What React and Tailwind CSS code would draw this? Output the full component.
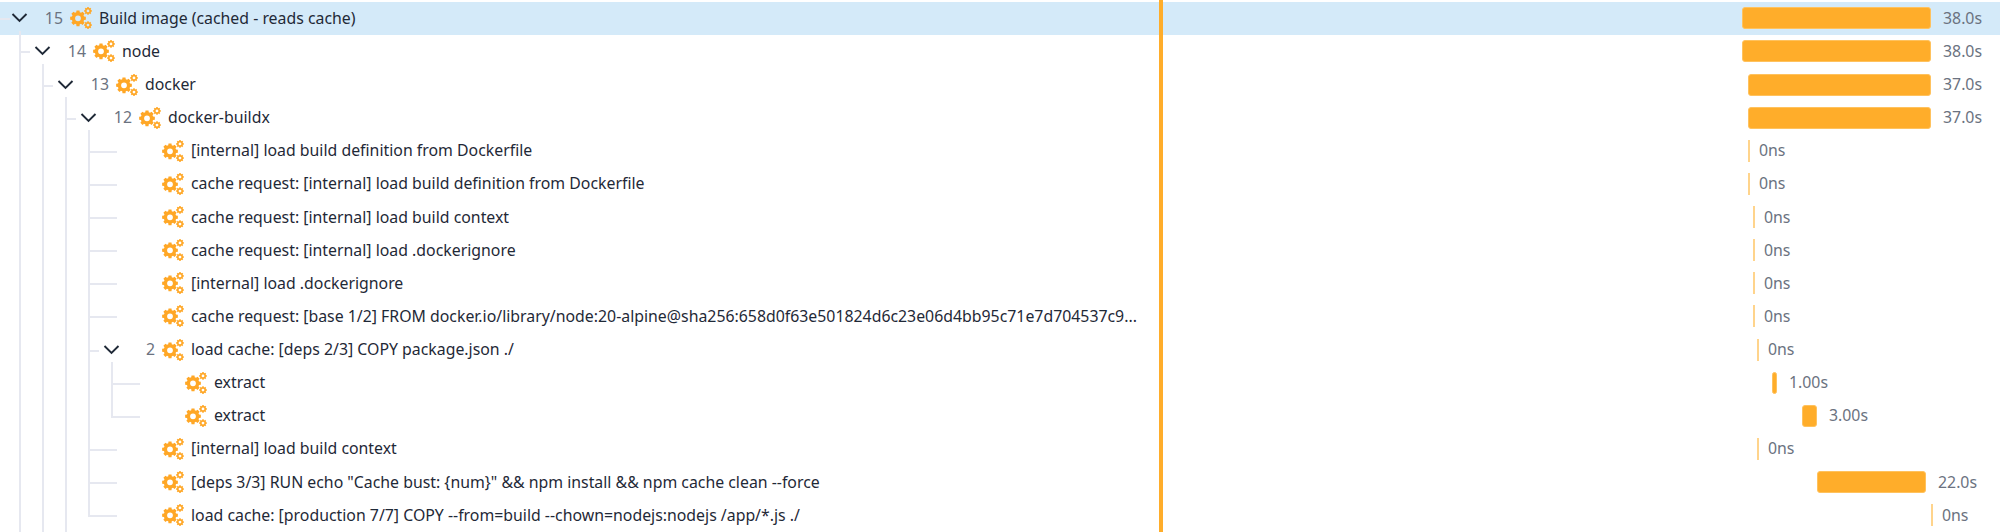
import React from "react";

function gearPath(cx, cy, rOuter, rRoot, rHole, teeth) {
  const pts = [];
  const step = (Math.PI * 2) / teeth;
  for (let i = 0; i < teeth; i++) {
    const a = i * step - Math.PI / 2;
    const w = step * 0.24;
    const w2 = step * 0.36;
    const p = (r, t) => `${(cx + r * Math.cos(t)).toFixed(2)} ${(cy + r * Math.sin(t)).toFixed(2)}`;
    pts.push(p(rRoot, a - w2), p(rOuter, a - w), p(rOuter, a + w), p(rRoot, a + w2));
  }
  const hole = `M${cx - rHole} ${cy}a${rHole} ${rHole} 0 1 0 ${rHole * 2} 0a${rHole} ${rHole} 0 1 0 ${-rHole * 2} 0Z`;
  return `M${pts.join("L")}Z${hole}`;
}

const GEARS = [gearPath(8, 11.3, 8, 6.3, 2.9, 8), gearPath(18, 3.9, 3.9, 3, 1.4, 8), gearPath(18, 18.1, 3.9, 3, 1.4, 8)];

function Gears() {
  return (
    <svg viewBox="0 0 22 22" className="w-[22px] h-[22px] shrink-0">
      {GEARS.map((d, i) => (
        <path key={i} d={d} fill="#ffa726" fillRule="evenodd" />
      ))}
    </svg>
  );
}

function Chevron() {
  return (
    <svg viewBox="0 0 17 12" className="w-[17px] h-[12px]" fill="none" stroke="#1f2937" strokeWidth="1.9">
      <path d="M1.5 2 L8.5 9 L15.5 2" />
    </svg>
  );
}

const rows = [
  { d: 0, n: 15, t: "Build image (cached - reads cache)", x: 579, w: 189, l: "38.0s", open: true, sel: true },
  { d: 1, n: 14, t: "node", x: 579, w: 189, l: "38.0s", open: true },
  { d: 2, n: 13, t: "docker", x: 585, w: 183, l: "37.0s", open: true },
  { d: 3, n: 12, t: "docker-buildx", x: 585, w: 183, l: "37.0s", open: true },
  { d: 4, t: "[internal] load build definition from Dockerfile", x: 585, l: "0ns" },
  { d: 4, t: "cache request: [internal] load build definition from Dockerfile", x: 585, l: "0ns" },
  { d: 4, t: "cache request: [internal] load build context", x: 590, l: "0ns" },
  { d: 4, t: "cache request: [internal] load .dockerignore", x: 590, l: "0ns" },
  { d: 4, t: "[internal] load .dockerignore", x: 590, l: "0ns" },
  { d: 4, t: "cache request: [base 1/2] FROM docker.io/library/node:20-alpine@sha256:658d0f63e501824d6c23e06d4bb95c71e7d704537c9...", x: 590, l: "0ns" },
  { d: 4, n: 2, t: "load cache: [deps 2/3] COPY package.json ./", x: 594, l: "0ns", open: true },
  { d: 5, t: "extract", x: 609, w: 5, l: "1.00s" },
  { d: 5, t: "extract", x: 639, w: 15, l: "3.00s", lastIn: true },
  { d: 4, t: "[internal] load build context", x: 594, l: "0ns" },
  { d: 4, t: "[deps 3/3] RUN echo \"Cache bust: {num}\" && npm install && npm cache clean --force", x: 654, w: 109, l: "22.0s" },
  { d: 4, t: "load cache: [production 7/7] COPY --from=build --chown=nodejs:nodejs /app/*.js ./", x: 768, l: "0ns", lastIn: true },
];

function Guide({ kind, stub }) {
  return (
    <div className="relative w-[23px] h-full shrink-0">
      <div className={`absolute left-0 top-0 w-[2px] bg-[#e6e8f0] ${kind === "end" ? "h-1/2" : "h-full"}`} />
      {stub ? <div className={`absolute left-0 top-1/2 h-[2px] bg-[#e6e8f0] ${stub}`} /> : null}
    </div>
  );
}

function Row({ r }) {
  const guides = [];
  for (let k = 1; k <= r.d; k++) {
    const isOwn = k === r.d;
    const end = isOwn && r.lastIn;
    const stub = isOwn ? (r.open ? "w-[11px]" : "w-[29px]") : null;
    guides.push(<Guide key={k} kind={end ? "end" : "full"} stub={stub} />);
  }
  return (
    <div className={`flex items-center h-[33.14px] ${r.sel ? "bg-[#d4eaf9]" : ""}`}>
      <div className="flex items-center w-[1159px] h-full shrink-0">
        <div className="relative w-[19px] h-full shrink-0">
          {r.d === 0 ? <div className="absolute left-0 top-1/2 w-[10px] h-[2px] bg-[#e6e8f0]" /> : null}
        </div>
        {guides}
        <div className="relative flex items-center justify-center w-[17px] h-full shrink-0 -ml-[8px]">
          {r.open ? (
            <>
              <Chevron />
              <div className="absolute left-[8px] top-[29px] bottom-0 w-[2px] bg-[#e6e8f0]" />
            </>
          ) : null}
        </div>
        <div className="w-[35px] pt-[1px] text-right text-[#6b7280] shrink-0">{r.n}</div>
        <div className="ml-[7px] shrink-0">
          <Gears />
        </div>
        <div className="ml-[7px] pt-[1px] whitespace-nowrap text-[#1f2937]">{r.t}</div>
      </div>
      <div className="w-[4px] shrink-0" />
      <div className="flex items-center h-full" style={{ marginLeft: r.x }}>
        {r.w ? (
          <div className="h-[22px] rounded-[3px] bg-[#ffad2a] border border-[#ffc25e] shrink-0" style={{ width: r.w }} />
        ) : (
          <div className="w-[2px] h-[22px] bg-[#ffd48c] shrink-0" />
        )}
        <div className={`pt-[1px] whitespace-nowrap text-[#6b7280] ${r.w ? "ml-[12px]" : "ml-[9px]"}`}>{r.l}</div>
      </div>
    </div>
  );
}

export default function App() {
  return (
    <div className="relative h-[532px] w-[2000px] overflow-hidden bg-white text-[15.85px] font-['Noto_Sans',sans-serif]">
      <div className="pt-[1.7px]">
        {rows.map((r, i) => (
          <Row key={i} r={r} />
        ))}
      </div>
      <div className="absolute left-[1159px] top-0 bottom-0 w-[4px] bg-[#ffad2a]" />
    </div>
  );
}
